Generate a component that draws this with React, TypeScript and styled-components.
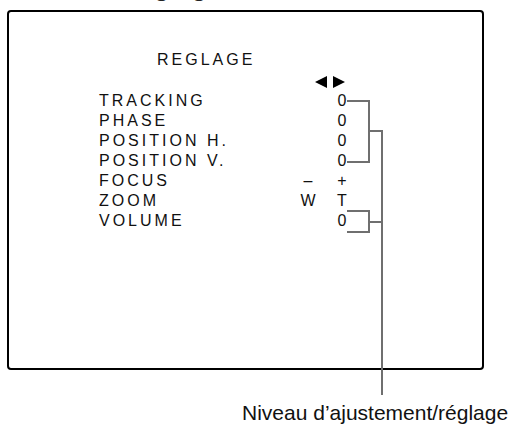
import React from "react";
import styled, { createGlobalStyle } from "styled-components";

const Global = createGlobalStyle`
  html, body { margin: 0; padding: 0; background: #ffffff; }
  body { font-family: "Liberation Sans", Arial, sans-serif; color: #111; overflow: hidden; }
`;

const Page = styled.div`
  position: relative;
  display: flow-root;
  width: 510px;
  height: 424px;
`;

const Heading = styled.div`
  margin: -28px 0 0 118px;
  font-size: 28px;
  line-height: 28px;
  height: 28px;
  color: #222;
`;

const Screen = styled.div`
  box-sizing: border-box;
  margin: 10px 0 0 7px;
  width: 477px;
  height: 360px;
  border: 2px solid #000;
  border-radius: 4px;
  padding: 38px 0 0 90px;
`;

const MenuTitle = styled.div`
  margin-left: 58px;
  font-size: 16px;
  line-height: 20px;
  letter-spacing: 3px;
`;

const ArrowRow = styled.div`
  display: flex;
  gap: 6px;
  margin: 6px 0 3px 216px;
  height: 12px;
`;

const Triangle = styled.span<{ $dir: "left" | "right" }>`
  width: 0;
  height: 0;
  border-top: 6px solid transparent;
  border-bottom: 6px solid transparent;
  ${(p) =>
    p.$dir === "left"
      ? "border-right: 12px solid #000;"
      : "border-left: 12px solid #000;"}
`;

const Row = styled.div`
  display: flex;
  gap: 4px;
  font-size: 16px;
  line-height: 20px;
`;

const Label = styled.span`
  width: 190px;
  letter-spacing: 3px;
  white-space: nowrap;
`;

const Cell = styled.span`
  width: 30px;
  text-align: center;
`;

const Caption = styled.div`
  margin: 31px 0 0 242px;
  font-size: 21px;
  line-height: 24px;
  white-space: nowrap;
  color: #111;
`;

const Leaders = styled.svg`
  position: absolute;
  left: 0;
  top: 0;
  pointer-events: none;
`;

const rows: { label: string; left?: string; right: string }[] = [
  { label: "TRACKING", right: "0" },
  { label: "PHASE", right: "0" },
  { label: "POSITION H.", right: "0" },
  { label: "POSITION V.", right: "0" },
  { label: "FOCUS", left: "–", right: "+" },
  { label: "ZOOM", left: "W", right: "T" },
  { label: "VOLUME", right: "0" },
];

export default function App() {
  return (
    <>
      <Global />
      <Page>
        <Heading>Réglage</Heading>
        <Screen>
          <MenuTitle>REGLAGE</MenuTitle>
          <ArrowRow>
            <Triangle $dir="left" />
            <Triangle $dir="right" />
          </ArrowRow>
          {rows.map((r) => (
            <Row key={r.label}>
              <Label>{r.label}</Label>
              <Cell>{r.left ?? ""}</Cell>
              <Cell>{r.right}</Cell>
            </Row>
          ))}
        </Screen>
        <Caption>Niveau d’ajustement/réglage</Caption>
        <Leaders width="510" height="424" viewBox="0 0 510 424">
          <g fill="none" stroke="#6f6f6f" strokeWidth="2">
            <polyline points="347,101 369,101 369,162 347,162" />
            <line x1="369" y1="131" x2="383" y2="131" />
            <polyline points="347,211 369,211 369,232 347,232" />
            <line x1="369" y1="222" x2="383" y2="222" />
            <line x1="382" y1="130" x2="382" y2="395" />
          </g>
        </Leaders>
      </Page>
    </>
  );
}
